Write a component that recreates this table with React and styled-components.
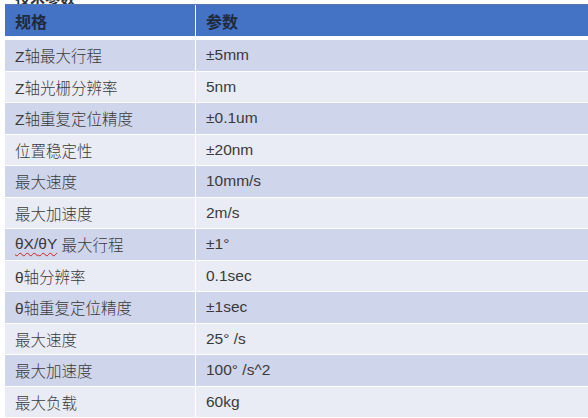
import React from 'react';
import styled, { createGlobalStyle } from 'styled-components';

const GlobalStyle = createGlobalStyle`
  html, body {
    margin: 0;
    padding: 0;
    background: #ffffff;
    overflow: hidden;
  }
  body {
    font-family: "Liberation Sans", Arial, "Noto Sans CJK SC", sans-serif;
  }
`;

const Page = styled.div`
  width: 588px;
  height: 418px;
  overflow: hidden;
  padding-left: 5px;
  box-sizing: border-box;
`;

const Caption = styled.div`
  height: 4px;
  overflow: hidden;
  padding-left: 10px;
  font-size: 15px;
  font-weight: bold;
  color: #333333;
  line-height: 4px;

  span {
    display: block;
    margin-top: -9px;
    line-height: 15px;
  }
`;

const Table = styled.div`
  width: 620px;
  display: grid;
  grid-template-columns: 190px 1fr;
  column-gap: 1px;
  row-gap: 1px;
  border-top: 1px solid #5a78b0;
`;

const HeaderCell = styled.div`
  background: #4472c4;
  height: 31px;
  margin-bottom: 3px;
  display: flex;
  align-items: center;
  padding-left: 10px;
  font-size: 16px;
  font-weight: bold;
  color: #1f2a3d;
`;

const Cell = styled.div`
  background: ${(p) => (p.$odd ? '#cfd5ea' : '#e9ebf5')};
  height: 30.5px;
  display: flex;
  align-items: center;
  padding-left: 10px;
  font-size: 15.5px;
  font-weight: 300;
  color: #3a3a3a;
  white-space: pre;
`;

const Squiggle = styled.span`
  text-decoration: underline wavy #d02020;
  text-decoration-thickness: 1px;
  text-underline-offset: 3px;
`;

const rows = [
  ['Z轴最大行程', '±5mm'],
  ['Z轴光栅分辨率', '5nm'],
  ['Z轴重复定位精度', '±0.1um'],
  ['位置稳定性', '±20nm'],
  ['最大速度', '10mm/s'],
  ['最大加速度', '2m/s'],
  [
    <>
      <Squiggle>θX/</Squiggle>
      <Squiggle>θY</Squiggle> 最大行程
    </>,
    '±1°',
  ],
  ['θ轴分辨率', '0.1sec'],
  ['θ轴重复定位精度', '±1sec'],
  ['最大速度', '25° /s'],
  ['最大加速度', '100° /s^2'],
  ['最大负载', '60kg'],
];

export default function App() {
  return (
    <Page>
      <GlobalStyle />
      <Caption>
        <span>技术参数</span>
      </Caption>
      <Table>
        <HeaderCell>规格</HeaderCell>
        <HeaderCell>参数</HeaderCell>
        {rows.map(([name, value], i) => (
          <React.Fragment key={i}>
            <Cell $odd={i % 2 === 0}>{name}</Cell>
            <Cell $odd={i % 2 === 0}>{value}</Cell>
          </React.Fragment>
        ))}
      </Table>
    </Page>
  );
}
